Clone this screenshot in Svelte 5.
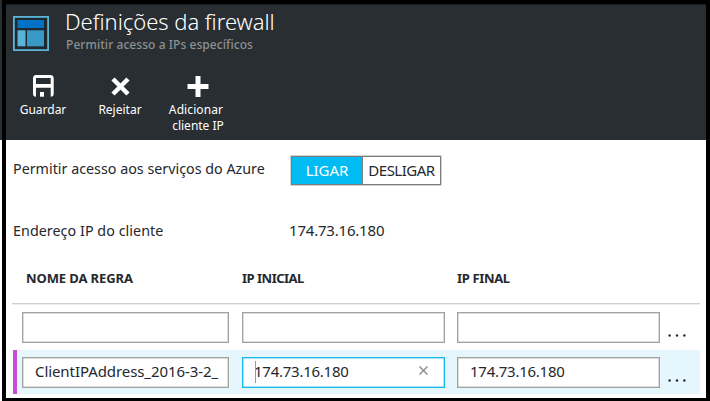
<script>
  const rules = [
    { name: '', start: '', end: '', active: false },
    { name: 'ClientIPAddress_2016-3-2_', start: '174.73.16.180', end: '174.73.16.180', active: true }
  ];
</script>

<div class="screen">
  <div class="edge"><i></i><b></b></div>
  <main class="blade">
    <header>
      <div class="heading">
        <svg class="logo" width="36" height="35" viewBox="0 0 36 35">
          <rect x=".9" y=".9" width="34.2" height="33.2" fill="#20282d" stroke="#59b4d9" stroke-width="1.8" />
          <rect x="4.5" y="4" width="26.5" height="8" fill="#0072c6" />
          <rect x="4.5" y="14.3" width="8" height="16" fill="#59b4d9" />
          <rect x="14" y="14.3" width="17" height="16" fill="#3999c6" />
        </svg>
        <div class="titles">
          <h1>Definições da firewall</h1>
          <p>Permitir acesso a IPs específicos</p>
        </div>
      </div>
      <nav>
        <button class="save">
          <svg width="22" height="22" viewBox="0 0 22 22">
            <path fill="#fff" fill-rule="evenodd" d="M4 0H18.500Q21.700 0 21.700 3.500V18.500Q21.700 21.700 18.700 21.700V12.700H4V21.700Q1 21.700 1 18.500V3.500Q1 0 4 0ZM4 3V9H18.700V3Z" />
            <path fill="#fff" d="M8 17H12V21.700H8Z" />
          </svg>
          <span>Guardar</span>
        </button>
        <button class="discard">
          <svg width="20" height="22" viewBox="0 0 20 22">
            <path d="M3 4L18 19M18 4L3 19" stroke="#fff" stroke-width="4.500" />
          </svg>
          <span>Rejeitar</span>
        </button>
        <button class="add">
          <svg width="22" height="22" viewBox="0 0 22 22">
            <path d="M11 1V22M0.500 11.500H21.500" stroke="#fff" stroke-width="5" />
          </svg>
          <span class="first">Adicionar</span><span>cliente IP</span>
        </button>
      </nav>
    </header>
    <section class="settings">
      <div class="setting access">
        <span class="label">Permitir acesso aos serviços do Azure</span>
        <div class="toggle">
          <span class="on">LIGAR</span><span class="off">DESLIGAR</span>
        </div>
      </div>
      <div class="setting client">
        <span class="label">Endereço IP do cliente</span>
        <span class="ip">174.73.16.180</span>
      </div>
    </section>
    <section class="rules">
      <div class="row head">
        <span class="h1">NOME DA REGRA</span><span class="h2">IP INICIAL</span><span class="h3">IP FINAL</span>
      </div>
      {#each rules as rule}
        <div class="row" class:active={rule.active}>
          <div class="field name"><span>{rule.name}</span></div>
          <div class="field start" class:focus={rule.active}>
            {#if rule.active}<i class="caret"></i>{/if}<span class="ip">{rule.start}</span>
            {#if rule.active}
              <svg class="clear" width="9" height="9" viewBox="0 0 9 9"><path d="M.5 .5L8.500 8.500M8.500 .5L.5 8.500" stroke="#858b90" stroke-width="1.400" /></svg>
            {/if}
          </div>
          <div class="field end"><span class="ip">{rule.end}</span></div>
          <svg class="more" width="19" height="3" viewBox="0 0 19 3"><g fill="#25282e"><circle cx="1.600" cy="1.500" r="1.200" /><circle cx="9" cy="1.500" r="1.200" /><circle cx="16.400" cy="1.500" r="1.200" /></g></svg>
        </div>
      {/each}
    </section>
  </main>
</div>

<style>
  .screen {
    box-sizing: border-box;
    width: 710px;
    height: 401px;
    display: flex;
    background: #000;
    overflow: hidden;
    color: #25282e;
    font: 15px/20px 'Noto Sans', sans-serif;
  }
  .edge { width: 2px; margin-right: 4px; display: flex; flex-direction: column; }
  .edge i { height: 140px; background: #282d31; }
  .edge b { flex: 1; background: #fff; }
  .blade { box-sizing: border-box; width: 700px; height: 394px; margin-top: 4px; background: #fff; overflow: hidden; }
  header { box-sizing: border-box; height: 136px; background: #292e32; color: #fff; border-top: 1px solid #181b1d; }
  .heading { display: flex; height: 66px; padding: 11px 0 0 7px; box-sizing: border-box; }
  .titles { margin: -10px 0 0 16px; }
  h1, p { margin: 0; white-space: nowrap; }
  h1 { font: 300 22px/30px 'Noto Sans', 'Open Sans', sans-serif; letter-spacing: -.03px; }
  p { font-size: 12px; line-height: 17px; font-weight: 500; color: #8d9193; letter-spacing: .06px; padding-left: 1px; }
  nav { display: flex; padding-top: 4px; }
  button { display: flex; flex-direction: column; align-items: center; padding: 0; border: 0; background: none; color: #fff; font: 12px/16px 'Noto Sans', sans-serif; white-space: nowrap; }
  button svg { margin-bottom: 5px; }
  .save { width: 74px; }
  .discard { width: 80px; }
  .add { width: 76px; }
  .first { margin-right: 4px; letter-spacing: .1px; }
  .settings { height: 120px; padding: 16px 0 0 7px; box-sizing: border-box; }
  .setting { display: flex; }
  .access { height: 62px; }
  .label { width: 278px; font-size: 14.3px; line-height: 26px; white-space: nowrap; }
  .toggle { display: flex; height: 29px; width: 150px; box-sizing: border-box; border: 1px solid #7c7c7c; box-shadow: 0 0 0 .5px #a5a5a5; }
  .toggle span { line-height: 27px; text-align: center; }
  .on { width: 70px; background: #00bcf2; color: #fff; border-right: 1px solid #7c7c7c; letter-spacing: -.1px; }
  .off { flex: 1; letter-spacing: -.5px; }
  .client .label { letter-spacing: .05px; }
  .client .ip { line-height: 24px; margin-left: -2px; letter-spacing: -.2px; }
  .ip { letter-spacing: -.25px; }
  .rules { padding-left: 6px; }
  .row { display: flex; width: 688px; height: 46px; padding: 8px 0 0 10px; box-sizing: border-box; }
  .head { height: 44px; padding: 8px 0 0 14px; border-bottom: 1px solid #cfcfcf; box-shadow: 0 1px #ededed; font-size: 13px; font-weight: 700; }
  .head span { white-space: nowrap; }
  .head .h1 { width: 216px; letter-spacing: -.1px; }
  .head .h2 { width: 215px; letter-spacing: -.5px; }
  .head .h3 { letter-spacing: -.35px; }
  .active { height: 44px; margin-left: 1px; width: 687px; padding: 7px 0 0 5px; border-left: 4px solid #c74cdb; background: #e5f6fd; }
  .field { position: relative; display: flex; align-items: center; box-sizing: border-box; width: 207px; height: 31px; margin-right: 13px; padding-left: 12px; border: 1px solid #a2a2a2; box-shadow: inset 0 0 0 .5px #bcbcbc; background: #fff; white-space: nowrap; }
  .field > span { margin-top: -4px; }
  .name { letter-spacing: -.08px; }
  .start, .end { width: 203px; }
  .start { margin-right: 12px; padding-left: 11px; }
  .end { margin-right: 8px; }
  .focus { border-color: #18b9ec; box-shadow: inset 0 0 0 .5px #55ccf2; }
  .caret { position: absolute; left: 12px; top: 3px; width: 1px; height: 22px; background: #9a9a9a; }
  .clear { margin-left: auto; margin-right: 16px; margin-top: -4px; }
  .more { margin-top: 22px; }
</style>
